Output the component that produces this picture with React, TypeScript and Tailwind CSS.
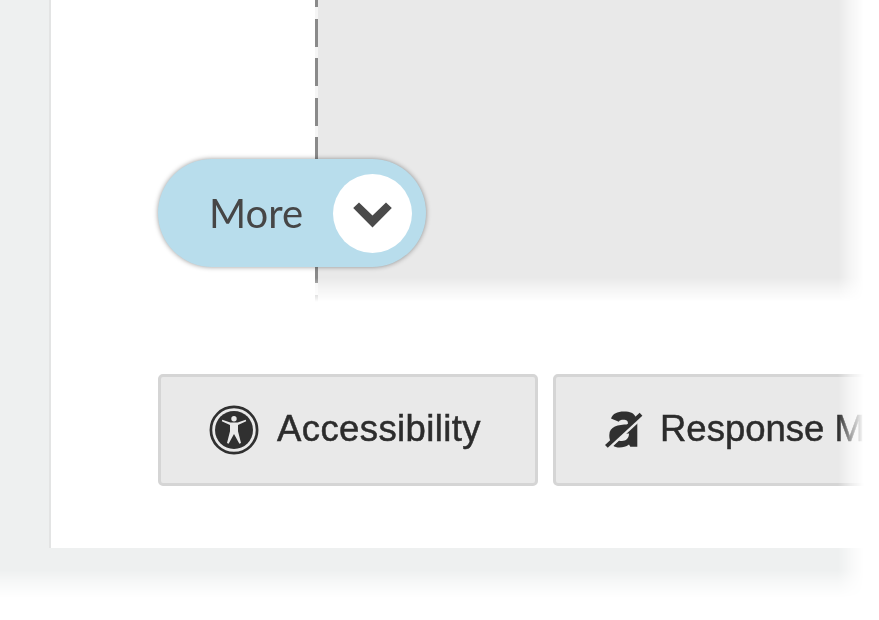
function ChevronIcon() {
  return (
    <svg className="w-[39px] h-[26px] mt-[3px]" viewBox="0 0 39 26" fill="#4a4a4a">
      <path d="M6 0.5 19.5 13.5 33 0.5 38.8 6 19.5 25.5 0.2 6Z" />
    </svg>
  );
}

function AccessibilityIcon() {
  return (
    <svg className="w-[50px] h-[50px] shrink-0" viewBox="0 0 50 50">
      <circle cx="25" cy="25" r="23.1" fill="none" stroke="#303030" strokeWidth="2.7" />
      <circle cx="25" cy="25" r="19" fill="#303030" />
      <circle cx="25" cy="13.8" r="2.7" fill="#e9e9e9" />
      <path
        d="M13.3 14.8 21.3 17.4H28.7L36.7 14.8 37.2 16.3 29 20V26.2L32 38 30.4 38.7 25 29 19.6 38.7 18 38 21 26.2V20L12.8 16.3Z"
        fill="#e9e9e9"
      />
    </svg>
  );
}

function ResponseMaskIcon() {
  return (
    <svg className="w-[40px] h-[40px] shrink-0" viewBox="0 0 40 40">
      <path
        d="M7 8.5C9 3.5 13 1.5 20 1.5C26 1.5 30 3 32 7.5L24 14.5C24.3 10.8 22.5 9.8 19.5 9.8C17 9.8 15.5 10.3 14.8 11.8Z"
        fill="#303030"
      />
      <path d="M24 14.6C14 14.6 5.3 16.5 5.3 25C5.3 28 5.8 30.5 7 32L25 15.5Z" fill="#303030" />
      <path
        d="M33.3 10V36.7H26.3L25 34.6C22 37 19 37.5 15.5 37.5C13 37.5 10.5 37 9 35.5L14.6 30.4C20 32 25 30 25 23.5L21 23.8Z"
        fill="#303030"
      />
      <path d="M4.3 38.7 39.4 6.3" stroke="#e9e9e9" strokeWidth="2.6" />
      <path d="M2.4 36.4 37 4.2" stroke="#303030" strokeWidth="4" />
    </svg>
  );
}

const buttonClass =
  'flex items-center h-[112px] rounded-[5px] border-[3px] border-[#d5d5d5] bg-[#e9e9e9] text-[36.5px] leading-none text-[#2c2c2c] whitespace-nowrap [-webkit-text-stroke:0.5px_#2c2c2c]';

export default function App() {
  return (
    <div className="w-[879px] h-[620px] overflow-hidden bg-white font-['Liberation_Sans',Arial,sans-serif]">
      <div className="h-[600px] bg-[#eef0f0] [mask-image:linear-gradient(to_right,black_838px,rgba(0,0,0,0.4)_852px,transparent_864px),linear-gradient(to_bottom,black_570px,rgba(0,0,0,0.45)_583px,transparent_598px)] [mask-composite:intersect]">
        <main className="relative ml-[49px] h-[548px] border-l-2 border-[#e3e4e4] bg-white overflow-hidden">
          <div className="flex h-[302px] [mask-image:linear-gradient(to_bottom,black_278px,rgba(0,0,0,0.45)_290px,transparent_302px)]">
            <div className="w-[264px] shrink-0" />
            <div className="w-[2.5px] shrink-0 bg-[repeating-linear-gradient(to_bottom,#8a8a8a_0px,#8a8a8a_28px,#f5f5f5_28px,#f5f5f5_39.4px)] bg-[position:0_-20.5px] bg-[length:100%_400px]" />
            <div className="flex-1 bg-[#e9e9e9]" />
          </div>

          <button
            type="button"
            className="absolute left-[107px] top-[159px] flex items-center justify-between w-[268px] h-[108px] rounded-full bg-[#b8ddec] pl-[51px] pr-[14px] shadow-[0_0_5px_0_rgba(0,0,0,0.4)]"
          >
            <span className="font-['Lato',sans-serif] text-[40px] leading-none text-[#464646]">More</span>
            <span className="flex items-center justify-center w-[79px] h-[79px] rounded-full bg-white">
              <ChevronIcon />
            </span>
          </button>

          <div className="mt-[72px] ml-[107px] flex gap-[15px]">
            <button type="button" className={`${buttonClass} w-[380px] shrink-0 gap-[18px] pl-[48px]`}>
              <AccessibilityIcon />
              <span className="pb-[2px] tracking-[0.4px]">Accessibility</span>
            </button>
            <button type="button" className={`${buttonClass} flex-1 gap-[16px] pl-[48px]`}>
              <ResponseMaskIcon />
              <span className="pb-[2px]">Response M</span>
            </button>
          </div>
        </main>
      </div>
    </div>
  );
}
